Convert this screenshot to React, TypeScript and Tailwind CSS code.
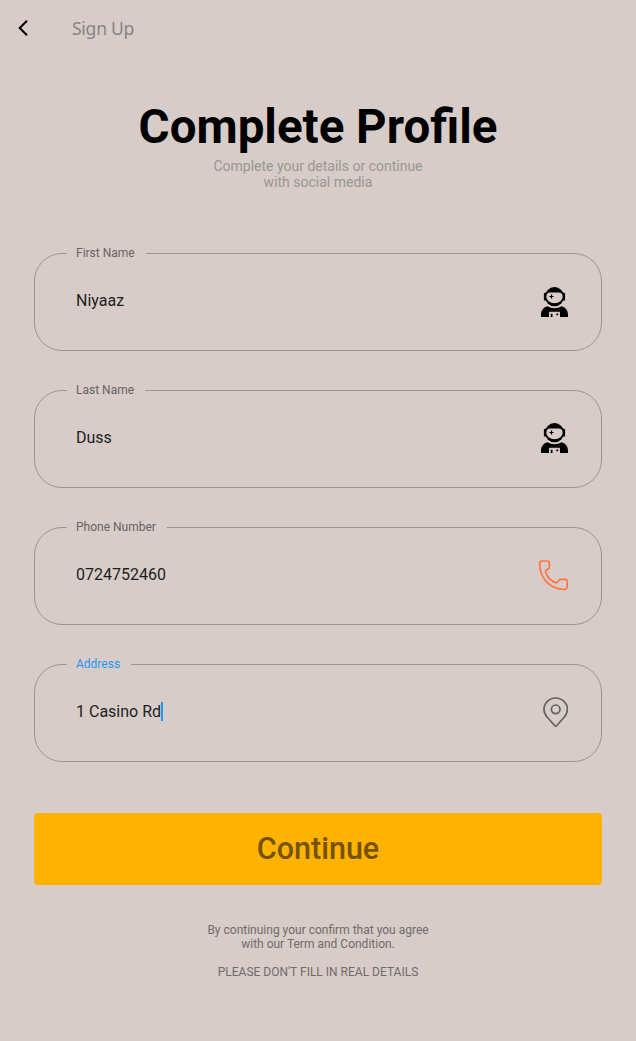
import type { ReactNode } from "react";

function AstronautIcon() {
  return (
    <svg width="27" height="31" viewBox="0 0 27 31" className="block">
      <circle cx="13.500" cy="9.700" r="9.600" fill="#000" />
      <rect x="2.900" y="5.800" width="21.200" height="7.800" rx="1.200" fill="#000" />
      <path d="M9.300 5.600h8.400c2.500 0 3.900 1.400 3.900 3.900 0 3.900-3.500 6.700-8.100 6.700s-8.100-2.800-8.100-6.700c0-2.500 1.400-3.900 3.900-3.900Z" fill="#d7ccc8" />
      <path d="M10.500 7.500v4M8.500 9.500h4" stroke="#000" strokeWidth="1.200" />
      <path d="M6.500 19.300c4.200 2.600 9.800 2.600 14 0 4 .8 6.500 4.200 6.500 8.700v2H0v-2c0-4.500 2.500-7.900 6.500-8.700Z" fill="#000" />
      <path d="M8 25.700q0-.9.900-.9h9.200q.9 0 .9.900V30H8Z" fill="#d7ccc8" />
      <path d="M10.600 26.800v3.200" stroke="#000" strokeWidth="1.800" />
      <path d="M15.300 27.400h1.900" stroke="#000" strokeWidth="1.700" />
    </svg>
  );
}

function PhoneIcon() {
  return (
    <svg width="30" height="31" viewBox="0 0 30 31" fill="none" stroke="#ff7643" strokeWidth="1.700" strokeLinejoin="round" className="block">
      <path d="M3.900 1h5.200c1.500 0 2.300.8 2.300 2.200v3.900c0 1-.5 1.600-1.300 2L8.600 9.700c-1 .5-1.300 1.200-1 2.200 1.500 5.100 5.200 8.900 10.200 10.700 1 .3 1.700 0 2.200-.9l.5-1.100c.4-.8 1-1.200 1.900-1.200h4.600c1.400 0 2.200.8 2.200 2.200v5.200c0 1.600-.8 2.400-2.300 2.500C13.100 29.800 1.700 19.200 1.600 3.500 1.600 1.900 2.400 1 3.900 1Z" />
    </svg>
  );
}

function PinIcon() {
  return (
    <svg width="25" height="31" viewBox="0 0 25 31" fill="none" stroke="#626262" strokeWidth="1.700" strokeLinejoin="round" className="block">
      <path d="M12.700 1C6.200 1 1 6 1 12.300c0 3.200 1.200 5.800 3.300 8l7.500 8.500q.9 1 1.800 0l7.500-8.500c2.100-2.200 3.300-4.800 3.300-8C24.400 6 19.200 1 12.700 1Z" />
      <circle cx="12.700" cy="12.300" r="4.300" />
    </svg>
  );
}

type FieldProps = { label: string; value: string; icon: ReactNode; focused?: boolean };

function Field({ label, value, icon, focused = false }: FieldProps) {
  return (
    <fieldset className="h-[106px] w-full rounded-[28px] border border-[#999695] pl-8 pr-[33px]">
      <legend className={`h-4 pl-[9px] pr-[11px] text-[12px] leading-4 ${focused ? "text-[#2196f3]" : "text-[#696361]"}`}>{label}</legend>
      <div className="flex h-[79px] items-center justify-between pl-[9px]">
        <div className="flex items-center text-[16px] leading-5 text-[#201f1e]">
          <span>{value}</span>
          {focused && <span className="h-[19px] w-[2px] bg-[#2196f3]" />}
        </div>
        {icon}
      </div>
    </fieldset>
  );
}

export default function App() {
  return (
    <div className="flex h-[1041px] w-full flex-col bg-[#d7ccc8] font-['Roboto',sans-serif]">
      <header className="flex h-14 items-center pl-[17px]">
        <svg width="12" height="18" viewBox="0 0 12 18" fill="none" stroke="#000" strokeWidth="2" className="block">
          <path d="M10 1.700 2.700 9l7.300 7.300" />
        </svg>
        <h2 className="ml-[43px] font-['Noto_Sans',sans-serif] text-[17.500px] leading-6 tracking-[-0.250px] text-[#868484]">Sign Up</h2>
      </header>
      <main className="flex flex-col items-center px-[34px] pt-[43px] text-center">
        <h1 className="text-[47.500px] font-bold leading-[56px] text-black">Complete Profile</h1>
        <p className="mt-[3px] text-[14px] leading-4 text-[#979794]">
          Complete your details or continue<br />with social media
        </p>
        <form className="mt-[55px] flex w-full flex-col gap-[31px] text-left">
          <Field label="First Name" value="Niyaaz" icon={<div className="pt-[3px]"><AstronautIcon /></div>} />
          <Field label="Last Name" value="Duss" icon={<div className="pt-[2px]"><AstronautIcon /></div>} />
          <Field label="Phone Number" value="0724752460" icon={<div className="pt-px"><PhoneIcon /></div>} />
          <Field label="Address" value="1 Casino Rd" icon={<div className="pt-px"><PinIcon /></div>} focused />
        </form>
        <button className="mt-[51px] h-[72px] w-full rounded-[4px] bg-[#ffb300] text-[30.500px] font-medium text-[#755200]">Continue</button>
        <p className="mt-[38px] text-[12px] leading-[14px] text-[#716b69]">
          By continuing your confirm that you agree<br />with our Term and Condition.<br /><br />PLEASE DON'T FILL IN REAL DETAILS
        </p>
      </main>
    </div>
  );
}
